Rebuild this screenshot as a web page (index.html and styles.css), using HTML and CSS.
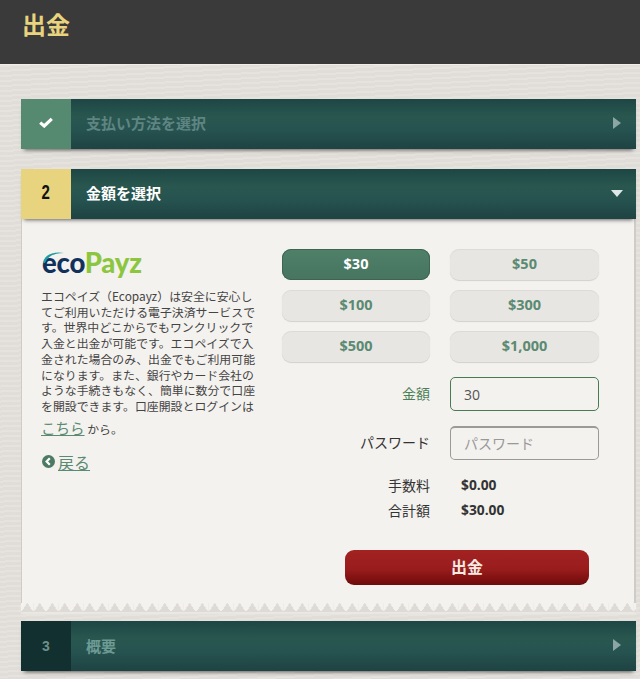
FILE: index.html
```html
<!DOCTYPE html>
<html lang="ja">
<head>
    <meta charset="UTF-8">
    <meta name="viewport" content="width=device-width, initial-scale=1.0">
    <title>出金</title>
    <link rel="stylesheet" href="styles.css">
</head>
<body>
    <header class="page-header">
        <h1>出金</h1>
    </header>
    <main class="steps">
        <div class="step-bar step-done">
            <div class="step-num">
                <svg width="14" height="11" viewBox="0 0 14 11"><path d="M1.2 5.6 L5.2 9 L12.8 1.8" fill="none" stroke="#fff" stroke-width="3.2"/></svg>
            </div>
            <div class="step-title">支払い方法を選択</div>
            <span class="arrow-right"></span>
        </div>

        <section class="step-open">
            <div class="step-bar step-current">
                <div class="step-num"><span class="num-narrow">2</span></div>
                <div class="step-title">金額を選択</div>
                <span class="arrow-down"></span>
            </div>
            <div class="panel">
                <div class="info">
                    <div class="logo">
                        <svg class="logo-arc" width="34" height="24" viewBox="0 0 34 24"><path d="M1 13 C2 5 11 1 22 3 C12 3 6 6 3 13 Z" fill="#1f9aa0"/></svg>
                        <span class="logo-eco">eco</span><span class="logo-payz">Payz</span>
                    </div>
                    <p class="info-text">エコペイズ（Ecopayz）は安全に安心し<br>てご利用いただける電子決済サービスで<br>す。世界中どこからでもワンクリックで<br>入金と出金が可能です。エコペイズで入<br>金された場合のみ、出金でもご利用可能<br>になります。また、銀行やカード会社の<br>ような手続きもなく、簡単に数分で口座<br>を開設できます。口座開設とログインは<br><a class="info-link" href="#">こちら</a> から。</p>
                    <a class="back-link" href="#">
                        <svg width="13" height="13" viewBox="0 0 13 13"><circle cx="6.5" cy="6.5" r="6.5" fill="#4d7a62"/><path d="M7.8 3.2 L4.6 6.5 L7.8 9.8" fill="none" stroke="#fff" stroke-width="2.2"/></svg>
                        <span>戻る</span>
                    </a>
                </div>
                <div class="form">
                    <div class="amounts">
                        <button class="amount amount-active">$30</button>
                        <button class="amount">$50</button>
                        <button class="amount">$100</button>
                        <button class="amount">$300</button>
                        <button class="amount">$500</button>
                        <button class="amount">$1,000</button>
                    </div>
                    <div class="field">
                        <label class="field-label label-green">金額</label>
                        <input class="field-input input-green" type="text" value="30">
                    </div>
                    <div class="field field-last">
                        <label class="field-label">パスワード</label>
                        <input class="field-input" type="text" placeholder="パスワード">
                    </div>
                    <div class="sum">
                        <span class="sum-label">手数料</span>
                        <span class="sum-value">$0.00</span>
                    </div>
                    <div class="sum">
                        <span class="sum-label">合計額</span>
                        <span class="sum-value">$30.00</span>
                    </div>
                    <button class="submit">出金</button>
                </div>
            </div>
            <div class="zigzag"></div>
        </section>

        <div class="step-bar step-next">
            <div class="step-num">3</div>
            <div class="step-title">概要</div>
            <span class="arrow-right"></span>
        </div>
    </main>
</body>
</html>
```

FILE: styles.css
```css
* {
    box-sizing: border-box;
}
body {
    margin: 0;
    height: 679px;
    overflow: hidden;
    font-family: "Noto Sans CJK JP", "Open Sans", sans-serif;
    background-color: #e3dfda;
    background-image: repeating-linear-gradient(177deg, rgba(255,255,255,.10) 0 2px, rgba(0,0,0,.012) 2px 5px);
    color: #333;
}
.page-header {
    height: 65px;
    padding: 8px 22px 0;
    background: #3a3a3a;
    border-bottom: 1px solid #f0eeea;
}
.page-header h1 {
    margin: 0;
    font-size: 24px;
    line-height: 32px;
    font-weight: 700;
    color: #e8d37e;
}
.steps {
    padding: 34px 4px 0 21px;
}
.step-bar {
    position: relative;
    z-index: 1;
    display: flex;
    align-items: center;
    height: 50px;
    background: linear-gradient(180deg, #1d4644 0, #29574f 35%, #265350 60%, #1e4342 100%);
    box-shadow: 0 4px 4px -3px rgba(0,0,0,.6);
}
.step-num {
    display: flex;
    align-items: center;
    justify-content: center;
    width: 50px;
    height: 100%;
    padding-bottom: 3px;
    font-family: "Liberation Sans", sans-serif;
    font-size: 20px;
    font-weight: 700;
}
.num-narrow {
    display: inline-block;
    transform: scaleX(.75);
}
.step-title {
    flex: 1;
    padding: 0 0 4px 15px;
    font-size: 15px;
    font-weight: 700;
}
.step-done .step-num {
    background: #568a70;
}
.step-done .step-title {
    color: #5f8583;
}
.step-current .step-num {
    background: #e8d37e;
    color: #111;
}
.step-current .step-title {
    color: #fff;
}
.step-next .step-num {
    padding-bottom: 0;
    background: #11302f;
    color: #6d8f88;
    font-size: 14px;
}
.step-next .step-title {
    padding-bottom: 2px;
    color: #6d9a94;
}
.arrow-right {
    margin: 0 15px 2px 0;
    border-left: 8px solid #8ba6a5;
    border-top: 6px solid transparent;
    border-bottom: 6px solid transparent;
}
.arrow-down {
    margin: 0 13px 1px 0;
    border-top: 7px solid #dfe6e6;
    border-left: 6px solid transparent;
    border-right: 6px solid transparent;
}
.step-open {
    margin-top: 20px;
}
.panel {
    display: flex;
    height: 384px;
    padding: 30px 37px 0 19px;
    background: #f4f2ef;
    border-left: 1px solid #cfccc7;
    border-right: 2px solid #cfccc7;
}
.info {
    width: 216px;
    margin-right: 25px;
    flex-shrink: 0;
}
.logo {
    position: relative;
    height: 32px;
    padding-left: 1px;
    font-family: "Lato", sans-serif;
    font-size: 27.5px;
    line-height: 28px;
    font-weight: 900;
    letter-spacing: -.2px;
}
.logo-arc {
    position: absolute;
    left: 1px;
    top: 1px;
}
.logo-eco {
    color: #12305c;
}
.logo-payz {
    color: #8cc63f;
}
.info-text {
    margin: 7px 0 0;
    font-size: 11.9px;
    line-height: 15.7px;
    color: #444;
    white-space: nowrap;
}
.info-link {
    display: inline-block;
    margin-top: 4px;
    font-size: 14.5px;
    line-height: 20px;
    color: #5b8a73;
}
.back-link {
    display: flex;
    align-items: center;
    gap: 3px;
    margin: 14px 0 0 1px;
    font-size: 16px;
    line-height: 20px;
    color: #5b8a73;
}
.back-link span {
    text-decoration: underline;
}
.form {
    width: 317px;
    flex-shrink: 0;
}
.amounts {
    display: grid;
    grid-template-columns: 148px 149px;
    grid-auto-rows: 31px;
    column-gap: 20px;
    row-gap: 10px;
    margin-bottom: 15px;
}
.amount {
    border: none;
    border-radius: 9px;
    padding: 0 0 2px;
    background: #e8e6e2;
    box-shadow: inset 0 1px 0 #dedbd6, 0 1px 1px #d4d1cc;
    font-family: "Open Sans", sans-serif;
    font-size: 14.5px;
    font-weight: 700;
    color: #5b8a73;
}
.amount-active {
    background: linear-gradient(180deg, #4f8068, #477560);
    box-shadow: inset 0 0 0 1px #3d6652;
    color: #fff;
}
.field {
    display: flex;
    align-items: center;
    height: 34px;
    margin-bottom: 15px;
}
.field-last {
    margin-bottom: 12px;
}
.field-label {
    width: 148px;
    margin: 0 20px 2px 0;
    text-align: right;
    font-size: 14px;
    color: #333;
}
.label-green {
    color: #4d7f56;
}
.field-input {
    width: 149px;
    height: 34px;
    padding: 0 13px;
    border: 1px solid #9a9a96;
    border-top-width: 2px;
    border-radius: 5px;
    background: #f4f2ef;
    font-family: "Open Sans", "Noto Sans CJK JP", sans-serif;
    font-size: 14px;
    color: #555;
}
.field-input::placeholder {
    font-family: "Noto Sans CJK JP", sans-serif;
    color: #999;
}
.input-green {
    border: 1px solid #4a7a50;
}
.sum {
    display: flex;
    align-items: center;
    height: 25px;
    font-size: 14px;
}
.sum-label {
    width: 148px;
    text-align: right;
    color: #333;
}
.sum-value {
    margin-left: 31px;
    font-family: "Open Sans", sans-serif;
    font-size: 13.8px;
    font-weight: 700;
    color: #333;
}
.submit {
    display: block;
    width: 244px;
    height: 35px;
    margin: 28px 0 0 63px;
    padding: 0 0 3px;
    border: none;
    border-radius: 9px;
    background: linear-gradient(180deg, #a32222 0, #991c1c 55%, #7d1010 85%, #6d0c0c 100%);
    font-family: "Noto Sans CJK JP", sans-serif;
    font-size: 16px;
    font-weight: 700;
    color: #f5e9e2;
}
.zigzag {
    height: 9px;
    margin-bottom: 9px;
    background-color: #dedbd6;
    background-image:
        linear-gradient(to bottom right, #f4f2ef 50%, transparent 50%),
        linear-gradient(to bottom left, #f4f2ef 50%, transparent 50%);
    background-size: 12.5px 18px;
    background-repeat: repeat-x;
    background-position: 0 -9px;
    box-shadow: 0 2px 3px #ecebe7;
}
```
